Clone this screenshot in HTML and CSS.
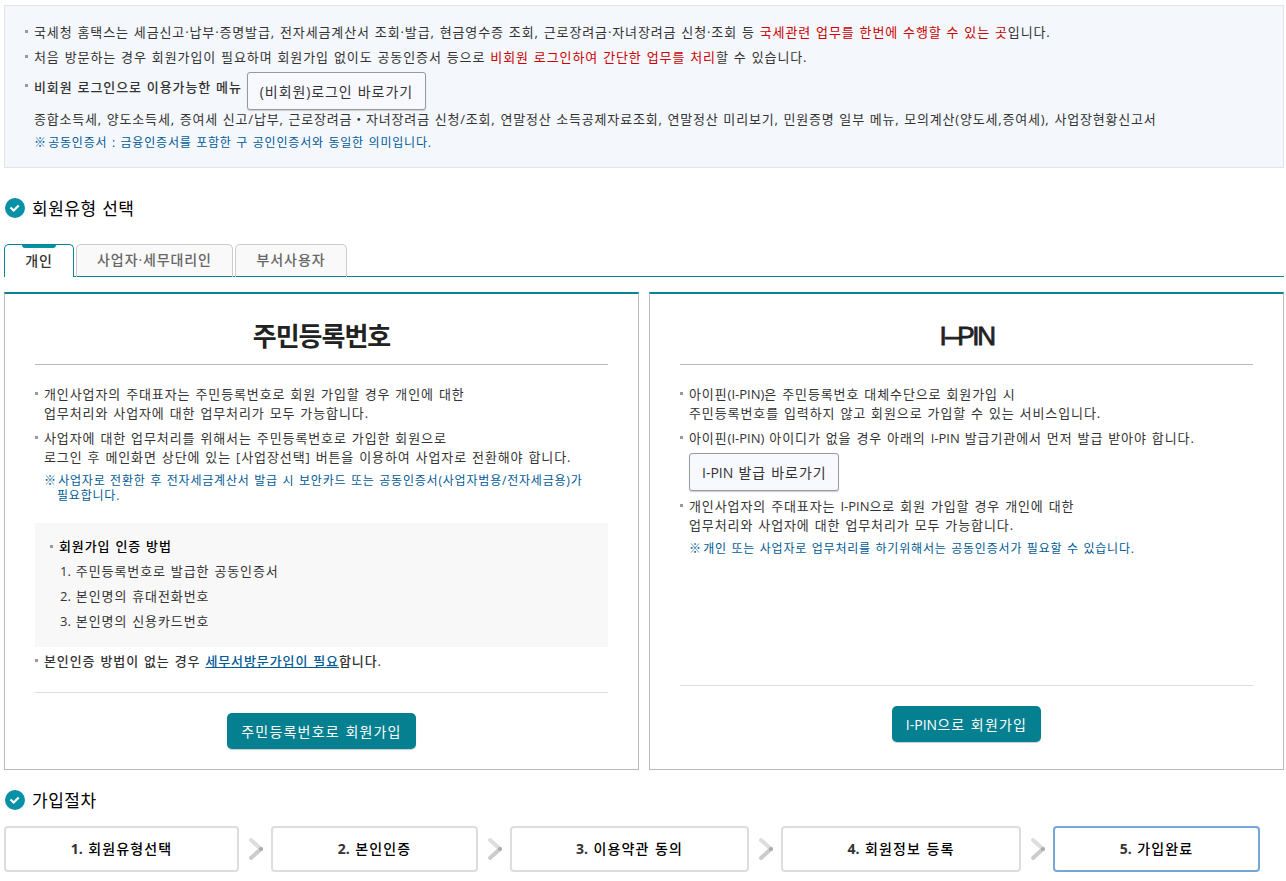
FILE: index.html
```html
<!DOCTYPE html>
<html lang="ko">
<head>
  <meta charset="UTF-8" />
  <title>회원가입</title>
  <link rel="stylesheet" href="styles.css">
</head>
<body>
  <div class="notice">
    <ul class="list">
      <li class="wide intro">국세청 홈택스는 세금신고·납부·증명발급, 전자세금계산서 조회·발급, 현금영수증 조회, 근로장려금·자녀장려금 신청·조회 등 <span class="red">국세관련 업무를 한번에 수행할 수 있는 곳</span>입니다.</li>
      <li class="wide">처음 방문하는 경우 회원가입이 필요하며 회원가입 없이도 공동인증서 등으로 <span class="red">비회원 로그인하여 간단한 업무를 처리</span>할 수 있습니다.</li>
      <li class="menu"><strong>비회원 로그인으로 이용가능한 메뉴</strong><button type="button" class="btn-line">(비회원)로그인 바로가기</button></li>
    </ul>
    <p class="menu-text">종합소득세, 양도소득세, 증여세 신고/납부, 근로장려금・자녀장려금 신청/조회, 연말정산 소득공제자료조회, 연말정산 미리보기, 민원증명 일부 메뉴, 모의계산(양도세,증여세), 사업장현황신고서</p>
    <p class="ref"><span class="mark">※</span> 공동인증서 : 금융인증서를 포함한 구 공인인증서와 동일한 의미입니다.</p>
  </div>

  <h2 class="heading">
    <svg class="check" viewBox="0 0 20 20"><circle cx="10" cy="10" r="10" /><path d="M5.500 9.500l3.200 3 5-5" /></svg>
    <span>회원유형 선택</span>
  </h2>

  <ul class="tabs">
    <li class="tab on">개인</li>
    <li class="tab tab-biz">사업자·세무대리인</li>
    <li class="tab tab-dept">부서사용자</li>
  </ul>

  <div class="panels">
    <section class="panel">
      <h3>주민등록번호</h3>
      <ul class="list">
        <li>개인사업자의 주대표자는 주민등록번호로 회원 가입할 경우 개인에 대한<br>업무처리와 사업자에 대한 업무처리가 모두 가능합니다.</li>
        <li>사업자에 대한 업무처리를 위해서는 주민등록번호로 가입한 회원으로<br>로그인 후 메인화면 상단에 있는 [사업장선택] 버튼을 이용하여 사업자로 전환해야 합니다.</li>
      </ul>
      <p class="ref"><span class="mark">※</span> 사업자로 전환한 후 전자세금계산서 발급 시 보안카드 또는 공동인증서(사업자범용/전자세금용)가<br>필요합니다.</p>
      <div class="gray-box">
        <h4>회원가입 인증 방법</h4>
        <ol>
          <li><span class="en">1.</span> 주민등록번호로 발급한 공동인증서</li>
          <li><span class="en">2.</span> 본인명의 휴대전화번호</li>
          <li><span class="en">3.</span> 본인명의 신용카드번호</li>
        </ol>
      </div>
      <ul class="list visit">
        <li>본인인증 방법이 없는 경우 <a href="#">세무서방문가입이 필요</a>합니다.</li>
      </ul>
      <div class="panel-foot foot-jumin"><button type="button" class="btn">주민등록번호로 회원가입</button></div>
    </section>

    <section class="panel">
      <h3 class="ipin"><span>I</span>–PIN</h3>
      <ul class="list">
        <li>아이핀<span class="en">(I-PIN)</span>은 주민등록번호 대체수단으로 회원가입 시<br>주민등록번호를 입력하지 않고 회원으로 가입할 수 있는 서비스입니다.</li>
        <li>아이핀<span class="en">(I-PIN)</span> 아이디가 없을 경우 아래의 <span class="en">I-PIN</span> 발급기관에서 먼저 발급 받아야 합니다.<button type="button" class="btn-line"><span class="en">I-PIN</span> 발급 바로가기</button></li>
        <li>개인사업자의 주대표자는 <span class="en">I-PIN</span>으로 회원 가입할 경우 개인에 대한<br>업무처리와 사업자에 대한 업무처리가 모두 가능합니다.</li>
      </ul>
      <p class="ref"><span class="mark">※</span> 개인 또는 사업자로 업무처리를 하기위해서는 공동인증서가 필요할 수 있습니다.</p>
      <div class="panel-foot foot-ipin"><button type="button" class="btn"><span class="en">I-PIN</span>으로 회원가입</button></div>
    </section>
  </div>

  <h2 class="heading heading-step">
    <svg class="check" viewBox="0 0 20 20"><circle cx="10" cy="10" r="10" /><path d="M5.500 9.500l3.200 3 5-5" /></svg>
    <span>가입절차</span>
  </h2>

  <ol class="steps">
    <li class="step"><b>1.</b> 회원유형선택</li>
    <li class="arrow"><svg viewBox="0 0 16 24"><path class="up" d="M3 3l10 9" /><path class="down" d="M3 21l10-9" /><circle cx="13" cy="12" r="2" /></svg></li>
    <li class="step"><b>2.</b> 본인인증</li>
    <li class="arrow"><svg viewBox="0 0 16 24"><path class="up" d="M3 3l10 9" /><path class="down" d="M3 21l10-9" /><circle cx="13" cy="12" r="2" /></svg></li>
    <li class="step"><b>3.</b> 이용약관 동의</li>
    <li class="arrow"><svg viewBox="0 0 16 24"><path class="up" d="M3 3l10 9" /><path class="down" d="M3 21l10-9" /><circle cx="13" cy="12" r="2" /></svg></li>
    <li class="step"><b>4.</b> 회원정보 등록</li>
    <li class="arrow"><svg viewBox="0 0 16 24"><path class="up" d="M3 3l10 9" /><path class="down" d="M3 21l10-9" /><circle cx="13" cy="12" r="2" /></svg></li>
    <li class="step last"><b>5.</b> 가입완료</li>
  </ol>
</body>
</html>
```
FILE: styles.css
```css
* {
  box-sizing: border-box;
}
body {
  margin: 0;
  padding: 5px 2px 0 4px;
  background: #fff;
  color: #333;
  font-family: "Open Sans", "Noto Sans CJK KR", sans-serif;
  font-size: 13px;
  line-height: 19px;
  letter-spacing: 0.9px;
  word-spacing: 0.7px;
  white-space: nowrap;
}
ul, ol, p, h2, h3, h4 {
  margin: 0;
  padding: 0;
  list-style: none;
}
button {
  display: block;
  font-family: inherit;
  letter-spacing: inherit;
  word-spacing: inherit;
  padding: 0;
}
.en {
  letter-spacing: 0;
}

/* 안내 */
.notice {
  height: 163px;
  padding: 14px 20px 0;
  background: #f4f7fc;
  border: 1px solid #dfe5ec;
}
.list li {
  padding-left: 9px;
  margin-bottom: 6px;
  background: linear-gradient(#999, #999) 0 7px / 3px 3px no-repeat;
}
.notice .list li.wide {
  line-height: 25px;
  margin: 0;
  background-position: 0 10px;
}
.notice .list li.intro {
  letter-spacing: 0.88px;
}
.notice .list li.menu {
  display: flex;
  gap: 5px;
  height: 40px;
  margin: 0;
  padding-top: 2px;
  background-position: 0 14px;
}
.menu strong {
  line-height: 30px;
  font-weight: 500;
}
.red {
  color: #c00;
}
.menu-text {
  padding-left: 9px;
  letter-spacing: 0.8px;
}
.ref {
  padding-left: 9px;
  color: #005a96;
  font-size: 12px;
  letter-spacing: 0.8px;
}
.mark {
  letter-spacing: -2.5px;
}
.notice .ref {
  line-height: 27px;
}
.btn-line {
  height: 38px;
  padding: 0 12px;
  border: 1px solid #999;
  border-radius: 3px;
  background: #f8f9ff;
  box-shadow: 0 1px 1px #ccc;
  color: #333;
  font-size: 14px;
}

.heading {
  display: flex;
  align-items: center;
  gap: 7px;
  height: 26px;
  margin-top: 27px;
  padding-left: 1px;
  color: #000;
  font-size: 17px;
  font-weight: 400;
  letter-spacing: 0.5px;
}
.check {
  width: 20px;
  height: 20px;
}
.check circle {
  fill: #0891a5;
}
.check path {
  fill: none;
  stroke: #fff;
  stroke-width: 2.2;
}

/* 탭 */
.tabs {
  display: flex;
  gap: 2px;
  height: 33px;
  margin-top: 23px;
  box-shadow: inset 0 -1px #068593;
}
.tab {
  border: 1px solid #ccc;
  border-bottom: 0;
  border-radius: 5px 5px 0 0;
  background: #f9f9f9;
  box-shadow: inset 0 -1px #068593;
  color: #666;
  font-size: 14px;
  font-weight: 500;
  line-height: 29px;
  text-align: center;
}
.tab.on {
  width: 70px;
  border-color: #068593;
  background: #fff;
  box-shadow: none;
  color: #333;
  line-height: 25px;
}
.tab.on::before {
  content: "";
  display: block;
  width: 34px;
  height: 3px;
  margin: 0 auto;
  border-radius: 0 0 4px 4px;
  background: #0891a5;
}
.tab-biz {
  width: 157px;
}
.tab-dept {
  width: 112px;
}

/* 가입 방법 */
.panels {
  display: grid;
  grid-template-columns: 1fr 1fr;
  gap: 10px;
  height: 478px;
  margin-top: 15px;
}
.panel {
  display: flex;
  flex-direction: column;
  padding: 0 30px;
  border: 1px solid #bbb;
  border-top: 2px solid #068593;
}
.panel h3 {
  height: 71px;
  margin-bottom: 20px;
  border-bottom: 1px solid #bbb;
  color: #222;
  font-size: 26px;
  font-weight: 700;
  letter-spacing: -1px;
  line-height: 84px;
  text-align: center;
}
.panel h3.ipin {
  font-family: "Liberation Sans", sans-serif;
  font-weight: 400;
  letter-spacing: -2.4px;
  -webkit-text-stroke: 0.8px #222;
}
.panel h3.ipin span {
  letter-spacing: -1.4px;
}
.panel .list .btn-line {
  margin-top: 5px;
}
.panel .ref {
  line-height: 15px;
  text-indent: -13px;
  padding-left: 22px;
}
.gray-box {
  height: 124px;
  margin-top: 20px;
  padding: 11px 15px;
  background: #f8f8f8;
  line-height: 25px;
}
.gray-box h4 {
  padding-left: 9px;
  background: linear-gradient(#999, #999) 0 11px / 3px 3px no-repeat;
  color: #000;
  font-size: 13px;
  font-weight: 500;
}
.gray-box ol {
  padding-left: 10px;
}
.visit {
  margin-top: 5px;
  font-weight: 500;
}
.visit a {
  color: #005a96;
}
.panel-foot {
  display: flex;
  justify-content: center;
  margin-top: auto;
  padding-top: 20px;
  border-top: 1px solid #ddd;
}
.foot-jumin {
  padding-bottom: 20px;
}
.foot-ipin {
  padding-bottom: 27px;
}
.btn {
  height: 36px;
  padding: 0 14px;
  border: 0;
  border-radius: 5px;
  background: #058090;
  box-shadow: 0 1px 1px #ccc;
  color: #fff;
  font-size: 14px;
  letter-spacing: 1.2px;
}

/* 가입절차 */
.heading-step {
  margin-top: 17px;
}
.steps {
  display: grid;
  grid-template-columns: 235px 32px 207px 32px 239px 32px 240px 32px 207px;
  height: 46px;
  margin-top: 13px;
}
.step {
  border: 2px solid #ddd;
  border-radius: 4px;
  color: #000;
  font-size: 14px;
  font-weight: 500;
  letter-spacing: 1.1px;
  line-height: 42px;
  text-align: center;
}
.step b {
  color: #333;
  letter-spacing: 0;
}
.step.last {
  border-color: #78a5d7;
}
.arrow {
  padding: 11px 0 0 9px;
}
.arrow svg {
  display: block;
  width: 16px;
  height: 24px;
  fill: none;
  stroke-width: 4;
  stroke-linecap: round;
}
.arrow .up {
  stroke: #ddd;
}
.arrow .down {
  stroke: #ccc;
}
.arrow circle {
  fill: #aaa;
}
```
